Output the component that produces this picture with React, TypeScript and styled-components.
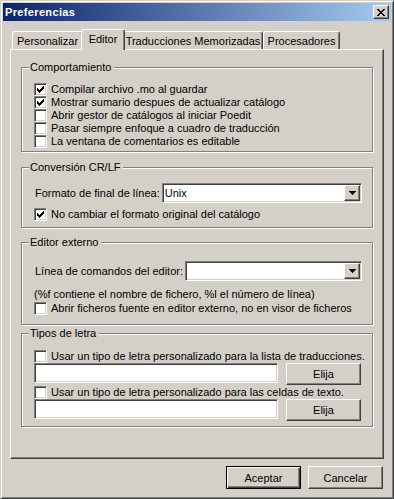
import React from "react";
import styled, { createGlobalStyle, css } from "styled-components";

const GlobalStyle = createGlobalStyle`
  html, body {
    margin: 0;
    padding: 0;
    background: #d4d0c8;
  }
  body {
    font-family: "Liberation Sans", Arial, sans-serif;
    font-size: 11px;
    color: #000;
  }
  * {
    box-sizing: border-box;
  }
`;

const raised = css`
  border: 1px solid;
  border-color: #fff #404040 #404040 #fff;
  box-shadow: inset -1px -1px 0 #808080, inset 1px 1px 0 #d4d0c8;
`;

const sunken = css`
  border: 1px solid;
  border-color: #808080 #fff #fff #808080;
  box-shadow: inset 1px 1px 0 #404040, inset -1px -1px 0 #d4d0c8;
  background: #fff;
`;

const Window = styled.div`
  width: 394px;
  height: 499px;
  display: flex;
  flex-direction: column;
  padding: 2px;
  background: #d4d0c8;
  border: 1px solid;
  border-color: #d4d0c8 #404040 #404040 #d4d0c8;
  box-shadow: inset 1px 1px 0 #fff, inset -1px -1px 0 #808080;
`;

const TitleBar = styled.div`
  height: 18px;
  flex: 0 0 18px;
  display: flex;
  align-items: center;
  justify-content: space-between;
  padding: 0 2px;
  background: linear-gradient(to right, #0a246a, #a6caf0);
  color: #fff;
  font-weight: bold;
  letter-spacing: 0.35px;
`;

const CloseButton = styled.div`
  width: 16px;
  height: 14px;
  display: flex;
  align-items: center;
  justify-content: center;
  background: #d4d0c8;
  ${raised};
`;

const Body = styled.div`
  display: flex;
  flex-direction: column;
  padding: 8px 7px 0;
`;

const TabRow = styled.div`
  display: flex;
  align-items: flex-end;
  height: 20px;
  padding-left: 2px;
  position: relative;
  z-index: 1;
`;

const Tab = styled.div<{ $active?: boolean; $w: number }>`
  width: ${(p) => p.$w}px;
  height: 18px;
  display: flex;
  align-items: center;
  justify-content: center;
  white-space: nowrap;
  background: #d4d0c8;
  border-top: 1px solid #fff;
  border-left: 1px solid #fff;
  border-right: 1px solid #404040;
  box-shadow: inset -1px 0 0 #808080;
  border-radius: 3px 3px 0 0;

  ${(p) =>
    p.$active &&
    css`
      height: 21px;
      margin: 0 -2px -1px;
      padding-bottom: 2px;
      position: relative;
      z-index: 1;
    `}
`;

const Panel = styled.div`
  height: 410px;
  display: flex;
  flex-direction: column;
  padding: 17px 10px 0;
  border: 1px solid;
  border-color: #fff #404040 #404040 #fff;
  box-shadow: inset -1px -1px 0 #808080;
`;

const Group = styled.div<{ $mt?: number; $pad: string }>`
  position: relative;
  display: flex;
  flex-direction: column;
  margin-top: ${(p) => p.$mt ?? 0}px;
  padding: ${(p) => p.$pad};
  border: 1px solid #808080;
  box-shadow: 1px 1px 0 #fff, inset 1px 1px 0 #fff;
`;

const Legend = styled.span`
  position: absolute;
  top: -7px;
  left: 7px;
  padding: 0 3px 0 1px;
  line-height: 13px;
  background: #d4d0c8;
`;

const CheckRow = styled.label<{ $mt?: number }>`
  display: flex;
  align-items: center;
  gap: 4px;
  height: 13px;
  line-height: 13px;
  margin-top: ${(p) => p.$mt ?? 0}px;
  white-space: nowrap;
`;

const Box = styled.span`
  width: 13px;
  height: 13px;
  flex: 0 0 13px;
  display: flex;
  align-items: center;
  justify-content: center;
  ${sunken};
`;

const ComboRow = styled.div`
  display: flex;
  align-items: center;
  gap: 2px;
  padding-left: 1px;
`;

const Label = styled.span`
  white-space: nowrap;
`;

const Combo = styled.div`
  flex: 1;
  height: 20px;
  display: flex;
  align-items: center;
  padding: 0 1px 0 2px;
  ${sunken};
`;

const ComboValue = styled.span`
  flex: 1;
`;

const ArrowButton = styled.span`
  width: 16px;
  height: 16px;
  display: flex;
  align-items: center;
  justify-content: center;
  background: #d4d0c8;
  ${raised};
`;

const Note = styled.div`
  margin-top: 7px;
  line-height: 13px;
  white-space: nowrap;
`;

const FieldRow = styled.div`
  display: flex;
  align-items: flex-start;
  gap: 8px;
  height: 22px;
`;

const TextInput = styled.div`
  width: 244px;
  height: 20px;
  ${sunken};
`;

const PushButton = styled.button<{ $default?: boolean; $h?: number }>`
  width: 75px;
  height: ${(p) => p.$h ?? 23}px;
  padding: 0;
  font: inherit;
  color: #000;
  background: #d4d0c8;
  ${(p) =>
    p.$default
      ? css`
          border: 1px solid #000;
          box-shadow: inset 1px 1px 0 #fff, inset -1px -1px 0 #404040,
            inset -2px -2px 0 #808080;
        `
      : raised};
`;

const Footer = styled.div`
  display: flex;
  justify-content: flex-end;
  gap: 7px;
  margin-top: 7px;
  padding-right: 1px;
`;

const CheckMark = () => (
  <svg width="7" height="7" viewBox="0 0 7 7" shapeRendering="crispEdges">
    <path
      d="M0 2h1v3H0z M1 3h1v3H1z M2 4h1v3H2z M3 3h1v3H3z M4 2h1v3H4z M5 1h1v3H5z M6 0h1v3H6z"
      fill="#000"
    />
  </svg>
);

const DownArrow = () => (
  <svg width="7" height="4" viewBox="0 0 7 4" shapeRendering="crispEdges">
    <path d="M0 0h7v1H0z M1 1h5v1H1z M2 2h3v1H2z M3 3h1v1H3z" fill="#000" />
  </svg>
);

const CloseGlyph = () => (
  <svg width="8" height="7" viewBox="0 0 8 7" shapeRendering="crispEdges">
    <path
      d="M0 0h2v1H0z M6 0h2v1H6z M1 1h2v1H1z M5 1h2v1H5z M2 2h4v1H2z M3 3h2v1H3z M2 4h4v1H2z M1 5h2v1H1z M5 5h2v1H5z M0 6h2v1H0z M6 6h2v1H6z"
      fill="#000"
    />
  </svg>
);

const Check = ({ on, label, mt }: { on?: boolean; label: string; mt?: number }) => (
  <CheckRow $mt={mt}>
    <Box>{on && <CheckMark />}</Box>
    {label}
  </CheckRow>
);

const tabs = [
  { label: "Personalizar", w: 71 },
  { label: "Editor", w: 44, active: true },
  { label: "Traducciones Memorizadas", w: 140 },
  { label: "Procesadores", w: 77 },
];

const App = () => {
  return (
    <>
      <GlobalStyle />
      <Window>
        <TitleBar>
          <span>Preferencias</span>
          <CloseButton>
            <CloseGlyph />
          </CloseButton>
        </TitleBar>
        <Body>
          <TabRow>
            {tabs.map((t) => (
              <Tab key={t.label} $w={t.w} $active={t.active}>
                {t.label}
              </Tab>
            ))}
          </TabRow>
          <Panel>
            <Group $pad="15px 12px 3px">
              <Legend>Comportamiento</Legend>
              <Check on label="Compilar archivo .mo al guardar" />
              <Check on label="Mostrar sumario despues de actualizar catálogo" />
              <Check label="Abrir gestor de catálogos al iniciar Poedit" />
              <Check label="Pasar siempre enfoque a cuadro de traducción" />
              <Check label="La ventana de comentarios es editable" />
            </Group>

            <Group $mt={15} $pad="15px 10px 6px 12px">
              <Legend>Conversión CR/LF</Legend>
              <ComboRow>
                <Label>Formato de final de línea:</Label>
                <Combo>
                  <ComboValue>Unix</ComboValue>
                  <ArrowButton>
                    <DownArrow />
                  </ArrowButton>
                </Combo>
              </ComboRow>
              <Check on mt={5} label="No cambiar el formato original del catálogo" />
            </Group>

            <Group $mt={14} $pad="18px 10px 9px 12px">
              <Legend>Editor externo</Legend>
              <ComboRow>
                <Label>Línea de comandos del editor:</Label>
                <Combo>
                  <ComboValue />
                  <ArrowButton>
                    <DownArrow />
                  </ArrowButton>
                </Combo>
              </ComboRow>
              <Note>(%f contiene el nombre de fichero, %l el número de línea)</Note>
              <Check mt={1} label="Abrir ficheros fuente en editor externo, no en visor de ficheros" />
            </Group>

            <Group $mt={8} $pad="16px 10px 5px 12px">
              <Legend>Tipos de letra</Legend>
              <Check label="Usar un tipo de letra personalizado para la lista de traducciones." />
              <FieldRow>
                <TextInput />
                <PushButton $h={22}>Elija</PushButton>
              </FieldRow>
              <Check mt={1} label="Usar un tipo de letra personalizado para las celdas de texto." />
              <FieldRow>
                <TextInput />
                <PushButton $h={22}>Elija</PushButton>
              </FieldRow>
            </Group>
          </Panel>
          <Footer>
            <PushButton $default>Aceptar</PushButton>
            <PushButton>Cancelar</PushButton>
          </Footer>
        </Body>
      </Window>
    </>
  );
};

export default App;
